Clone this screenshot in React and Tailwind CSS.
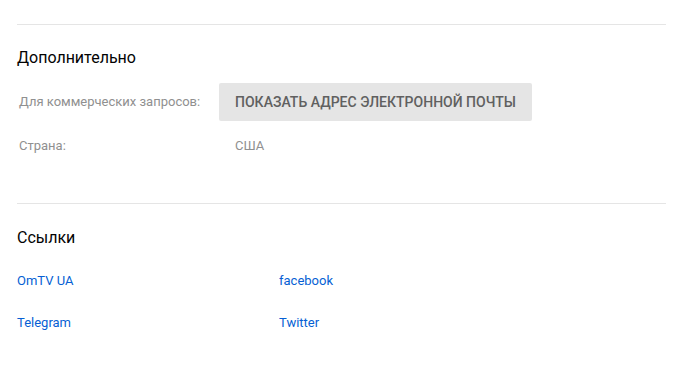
import React from "react";

const links = [
  ["OmTV UA", "facebook"],
  ["Telegram", "Twitter"],
];

const App = () => {
  return (
    <div className="min-h-[388px] w-[681px] bg-white font-['Roboto',sans-serif]">
      <div className="ml-[17px] mr-[15px] pt-[24px]">
        {/* Additional */}
        <div className="border-t border-[#e5e5e5]">
          <h2 className="mt-[22px] text-[16px] leading-[22px] text-[#030303]">
            Дополнительно
          </h2>
          <div className="mt-[14px] flex items-center">
            <div className="w-[202px] pl-[2px] text-[13px] leading-[18px] text-[#909090]">
              Для коммерческих запросов:
            </div>
            <button className="h-[38px] w-[313px] rounded-[2px] bg-[#e5e5e5] px-[16px] text-left text-[14px] font-medium uppercase tracking-[0.007px] text-[#606060]">
              Показать адрес электронной почты
            </button>
          </div>
          <div className="mt-[16px] flex items-center">
            <div className="w-[202px] pl-[2px] text-[13px] leading-[18px] text-[#909090]">
              Страна:
            </div>
            <div className="pl-[16px] text-[13px] leading-[18px] text-[#909090]">
              США
            </div>
          </div>
        </div>

        {/* Links */}
        <div className="mt-[48px] border-t border-[#e5e5e5]">
          <h2 className="mt-[23px] text-[16px] leading-[22px] text-[#030303]">
            Ссылки
          </h2>
          <div className="mt-[23px] flex flex-col gap-[24px]">
            {links.map((row, i) => (
              <div key={i} className="flex">
                {row.map((name) => (
                  <a
                    key={name}
                    href="#"
                    className="w-[262px] text-[13px] leading-[18px] text-[#065fd4]"
                  >
                    {name}
                  </a>
                ))}
              </div>
            ))}
          </div>
        </div>
      </div>
    </div>
  );
};

export default App;
